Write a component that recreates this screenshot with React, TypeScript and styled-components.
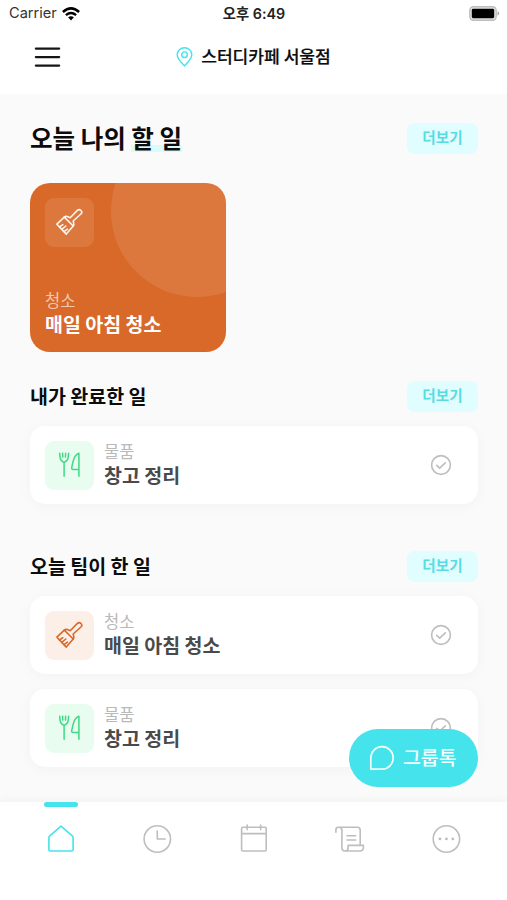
import React from "react";
import styled, { createGlobalStyle, css } from "styled-components";

const cyan = "#45e3ec";
const sand = "#d96928";
const green = "#3fd985";
const gray = "#bebebe";

const GlobalStyle = createGlobalStyle`
  * { box-sizing: border-box; }
  body {
    margin: 0;
    background: #fff;
    color: #0c0c0c;
    font-family: "Noto Sans CJK KR", "Noto Sans", sans-serif;
  }
  svg { display: block; flex: none; }
  h1, h2, p { margin: 0; }
  button { font-family: inherit; border: 0; padding: 0; }
`;

const Screen = styled.div`
  position: relative;
  display: flex;
  flex-direction: column;
  width: 507px;
  height: 900px;
  overflow: hidden;
  background: #fff;
`;

const StatusBar = styled.header`
  display: grid;
  grid-template-columns: 1fr auto 1fr;
  align-items: center;
  height: 27px;
  padding: 0 7px 0 9px;
  font-family: Inter, "Noto Sans CJK KR", sans-serif;
  font-size: 14.6px;
  line-height: 27px;
`;

const Carrier = styled.div`
  display: flex;
  align-items: center;
  gap: 5px;
  color: #333;
`;

const Time = styled.span`
  padding-right: 1px;
  font-size: 14.3px;
  font-weight: 600;
  color: #222;
`;

const BatterySlot = styled.div`
  justify-self: end;
`;

const TopBar = styled.div`
  display: grid;
  grid-template-columns: 1fr auto 1fr;
  align-items: center;
  height: 67px;
  padding: 0 34px 7px;
`;

const MenuButton = styled.button`
  width: 27px;
  background: none;
`;

const Place = styled.div`
  display: flex;
  align-items: center;
  gap: 8px;
  font-size: 17.1px;
  line-height: 24px;
  font-weight: 500;
  -webkit-text-stroke: 0.2px currentColor;
`;

const PlaceName = styled.span`
  padding-bottom: 2px;
`;

const Content = styled.main`
  flex: 1;
  min-height: 0;
  overflow: hidden;
  padding: 29px 29px 0 30px;
  background: #fafafa;
`;

const Section = styled.section<{ $after: number }>`
  margin-bottom: ${(p) => p.$after}px;
`;

const SectionHead = styled.div<{ $gap: number }>`
  display: flex;
  align-items: center;
  justify-content: space-between;
  height: 31px;
  margin-bottom: ${(p) => p.$gap}px;
`;

const PageTitle = styled.h1`
  padding-bottom: 2px;
  font-size: 24.5px;
  line-height: 31px;
  font-weight: 700;
`;

const Marked = styled.span`
  background: linear-gradient(#d9fbfb, #d9fbfb) 0 88% / 100% 7px no-repeat;
`;

const SectionTitle = styled.h2`
  font-size: 19.5px;
  line-height: 31px;
  font-weight: 700;
  padding-bottom: 3px;
`;

const MoreButton = styled.button`
  width: 71px;
  height: 31px;
  padding-bottom: 3px;
  border-radius: 8px;
  background: #e0fdff;
  color: #58dbe3;
  font-size: 14.6px;
  line-height: 28px;
  font-weight: 700;
`;

const Feature = styled.article`
  position: relative;
  display: flex;
  flex-direction: column;
  justify-content: space-between;
  width: 196px;
  height: 169px;
  padding: 15px 15px 16px;
  overflow: hidden;
  border-radius: 20px;
  background: ${sand};
  color: #fff;

  &::before {
    content: "";
    position: absolute;
    top: -58px;
    left: 81px;
    width: 172px;
    height: 172px;
    border-radius: 50%;
    background: rgba(255, 255, 255, 0.1);
  }
`;

const tones = {
  glass: css`background: rgba(255, 255, 255, 0.1); color: #fff3ec;`,
  sand: css`background: #fbefe8; color: ${sand};`,
  green: css`background: #e8fcf0; color: ${green};`,
};

const IconTile = styled.div<{ $tone: keyof typeof tones }>`
  display: grid;
  place-items: center;
  flex: none;
  width: 49px;
  height: 49px;
  padding: 0 1px 1px 0;
  border-radius: 9px;
  ${(p) => tones[p.$tone]}
`;

const Category = styled.p<{ $light?: boolean }>`
  font-size: 16.5px;
  line-height: 23px;
  font-weight: 400;
  color: ${(p) => (p.$light ? "#f2c7af" : "#b9b9b9")};
`;

const TaskName = styled.p<{ $light?: boolean }>`
  font-size: 19.5px;
  line-height: 24px;
  font-weight: 700;
  color: ${(p) => (p.$light ? "#fff" : "#4a4a4a")};
`;

const TaskList = styled.div`
  display: grid;
  gap: 15px;
`;

const TaskCard = styled.article`
  display: flex;
  align-items: center;
  gap: 10px;
  height: 78px;
  padding: 0 26px 0 15px;
  border-radius: 15px;
  background: #fff;
  box-shadow: 0 2px 14px rgba(0, 0, 0, 0.035);
`;

const TaskText = styled.div`
  flex: 1;
  padding-bottom: 3px;
`;

const ChatButton = styled.button`
  position: absolute;
  right: 29px;
  bottom: 113px;
  display: flex;
  align-items: center;
  gap: 8px;
  width: 129px;
  height: 58px;
  padding: 0 0 0 20px;
  border-radius: 29px;
  background: ${cyan};
  color: #f4ffff;
  font-size: 19.4px;
  font-weight: 500;
`;

const ChatLabel = styled.span`
  padding-bottom: 3px;
  line-height: 28px;
`;

const TabBar = styled.nav`
  display: grid;
  grid-template-columns: repeat(5, 96.4px);
  justify-content: center;
  height: 98px;
  background: #fff;
  box-shadow: 0 -2px 8px rgba(0, 0, 0, 0.035);
  z-index: 1;
`;

const Tab = styled.button<{ $active?: boolean }>`
  display: flex;
  flex-direction: column;
  align-items: center;
  gap: 17px;
  background: none;
  color: ${(p) => (p.$active ? cyan : gray)};

  &::before {
    content: "";
    width: 34px;
    height: 5px;
    border-radius: 3px;
    background: ${(p) => (p.$active ? cyan : "transparent")};
  }
`;

const WifiIcon = () => (
  <svg width="18" height="14" viewBox="0 0 18 14" fill="none" stroke="#000" strokeWidth="2.5">
    <path d="M.9 5Q9-2.2 17.1 5" />
    <path d="M3.9 8.1q5.1-4.3 10.2 0" />
    <path d="M6.1 10.3Q9 8.1 11.9 10.3L9 13.5z" fill="#000" stroke="none" />
  </svg>
);

const BatteryIcon = () => (
  <svg width="31" height="15" viewBox="0 0 31 15">
    <rect x=".8" y=".8" width="26.4" height="13.4" rx="3.6" fill="#e4e4e4" stroke="#bdbdbd" strokeWidth="1.4" />
    <rect x="2.8" y="2.8" width="22.4" height="9.4" rx="1.4" fill="#000" />
    <path d="M28.5 5.3q1.8.6 1.8 2.2t-1.8 2.2z" fill="#aaa" />
  </svg>
);

const MenuIcon = () => (
  <svg width="27" height="22" viewBox="0 0 27 22" stroke="#161616" strokeWidth="2.1" strokeLinecap="round">
    <path d="M1.8 2.6h23.4M1.8 11.1h23.4M1.8 19.6h23.4" />
  </svg>
);

const PinIcon = () => (
  <svg width="17" height="20" viewBox="0 0 17 20" fill="none" stroke={cyan} strokeWidth="1.4">
    <path d="M8.5 18.9C6.7 16.8 1.2 12 1.2 7.7a7.3 7 0 0 1 14.6 0c0 4.3-5.5 9.1-7.3 11.2z" strokeLinejoin="round" />
    <circle cx="8.5" cy="7.7" r="2.8" />
  </svg>
);

const BrushIcon = () => (
  <svg width="28" height="28" viewBox="0 0 28 28" fill="none" stroke="currentColor" strokeWidth="1.6" strokeLinecap="round" strokeLinejoin="round">
    <path d="M9.3 9.1 18.2 18Q19.2 16.8 18.7 15.2L18.2 13 25.9 6A2.4 2.4 0 0 0 22.4 2.4L15.2 9.7 12.3 8.6Q10.6 8 9.3 9.1z" />
    <path d="M9.3 9.1 1.9 16.2 11.3 26.1 18.2 18" />
    <path d="M4.5 19 7.8 16.7M6.8 21.3 10.8 18M9 23.6l3.5-2.5" />
  </svg>
);

const CutleryIcon = () => (
  <svg width="23" height="26" viewBox="0 0 23 26" fill="none" stroke="currentColor" strokeWidth="1.5" strokeLinecap="round" strokeLinejoin="round">
    <path d="M1.7 1.2 2.1 5.5Q2.7 9.2 6 10.4 9.6 9.2 10.2 5.5L10.6 1.2M4.6 1.2 4.8 5.1M7.6 1.2 7.4 5.1M6.1 10.4V24.3" />
    <path d="M20.9 24.3V1.2Q16.4 2.7 14.9 10.2L13.7 15.6Q13.4 17.4 15.2 17.4H20.9" />
  </svg>
);

const CheckIcon = () => (
  <svg width="22" height="22" viewBox="0 0 22 22" fill="none" stroke={gray} strokeWidth="1.6" strokeLinecap="round" strokeLinejoin="round">
    <circle cx="11" cy="11" r="9.4" />
    <path d="m6.7 11.4 3 2.8 5.6-5.4" />
  </svg>
);

const BubbleIcon = () => (
  <svg width="26" height="26" viewBox="0 0 26 26" fill="none" stroke="currentColor" strokeWidth="1.7">
    <path d="M1.8 24.1V13A11.2 11.2 0 1 1 13 24.1z" strokeLinejoin="round" />
  </svg>
);

const TabSvg = ({ children }: { children: React.ReactNode }) => (
  <svg width="30" height="30" viewBox="0 0 30 30" fill="none" stroke="currentColor" strokeWidth="1.6" strokeLinecap="round" strokeLinejoin="round">
    {children}
  </svg>
);

const tabs = [
  {
    name: "home",
    icon: <path d="M15 2.1 3.8 11.9Q2.9 12.7 2.9 13.7V25.7Q2.9 27 4.2 27H25.8Q27.1 27 27.1 25.7V13.7Q27.1 12.7 26.2 11.9z" />,
  },
  {
    name: "history",
    icon: (
      <>
        <circle cx="15.3" cy="15" r="13.2" />
        <path d="M15.3 7v8h7.9" />
      </>
    ),
  },
  {
    name: "calendar",
    icon: (
      <>
        <rect x="3.6" y="3.2" width="24.6" height="23.8" rx="1.2" />
        <path d="M3.6 9.6h24.6M9.2 1v4.6M22.6 1v4.6" />
      </>
    ),
  },
  {
    name: "records",
    icon: (
      <>
        <path d="M.9 8.2V5.6Q.9 3.3 3.2 3.3H22.3Q25.2 3.3 25.2 6.2V20.4M3.8 3.3Q6.9 3.3 6.9 6.5V23.8Q6.9 27 9.8 27H25Q28.3 27 28.4 23.5V21.4H13.1V23.8Q13.1 27 10.3 27" />
        <path d="M12 11.8h8.7M12 16h8.7" />
      </>
    ),
  },
  {
    name: "more",
    icon: (
      <>
        <circle cx="15.4" cy="15" r="13.2" />
        <path d="M8.9 14.9h.1M15.4 14.9h.1M21.8 14.9h.1" strokeWidth="2.7" />
      </>
    ),
  },
];

type Kind = "cleaning" | "supplies";

const kinds = {
  cleaning: { label: "청소", tone: "sand", icon: <BrushIcon /> },
  supplies: { label: "물품", tone: "green", icon: <CutleryIcon /> },
} as const;

const Task = ({ kind, name }: { kind: Kind; name: string }) => (
  <TaskCard>
    <IconTile $tone={kinds[kind].tone}>{kinds[kind].icon}</IconTile>
    <TaskText>
      <Category>{kinds[kind].label}</Category>
      <TaskName>{name}</TaskName>
    </TaskText>
    <CheckIcon />
  </TaskCard>
);

export default function App() {
  return (
    <>
      <GlobalStyle />
      <Screen>
        <StatusBar>
          <Carrier>
            Carrier
            <WifiIcon />
          </Carrier>
          <Time>오후 6:49</Time>
          <BatterySlot>
            <BatteryIcon />
          </BatterySlot>
        </StatusBar>
        <TopBar>
          <MenuButton>
            <MenuIcon />
          </MenuButton>
          <Place>
            <PinIcon />
            <PlaceName>스터디카페 서울점</PlaceName>
          </Place>
        </TopBar>
        <Content>
          <Section $after={29}>
            <SectionHead $gap={29}>
              <PageTitle>
                오늘 나의 <Marked>할 일</Marked>
              </PageTitle>
              <MoreButton>더보기</MoreButton>
            </SectionHead>
            <Feature>
              <IconTile $tone="glass">
                <BrushIcon />
              </IconTile>
              <div>
                <Category $light>청소</Category>
                <TaskName $light>매일 아침 청소</TaskName>
              </div>
            </Feature>
          </Section>
          <Section $after={47}>
            <SectionHead $gap={14}>
              <SectionTitle>내가 완료한 일</SectionTitle>
              <MoreButton>더보기</MoreButton>
            </SectionHead>
            <Task kind="supplies" name="창고 정리" />
          </Section>
          <Section $after={0}>
            <SectionHead $gap={14}>
              <SectionTitle>오늘 팀이 한 일</SectionTitle>
              <MoreButton>더보기</MoreButton>
            </SectionHead>
            <TaskList>
              <Task kind="cleaning" name="매일 아침 청소" />
              <Task kind="supplies" name="창고 정리" />
            </TaskList>
          </Section>
        </Content>
        <TabBar>
          {tabs.map((tab, i) => (
            <Tab key={tab.name} $active={i === 0}>
              <TabSvg>{tab.icon}</TabSvg>
            </Tab>
          ))}
        </TabBar>
        <ChatButton>
          <BubbleIcon />
          <ChatLabel>그룹톡</ChatLabel>
        </ChatButton>
      </Screen>
    </>
  );
}
